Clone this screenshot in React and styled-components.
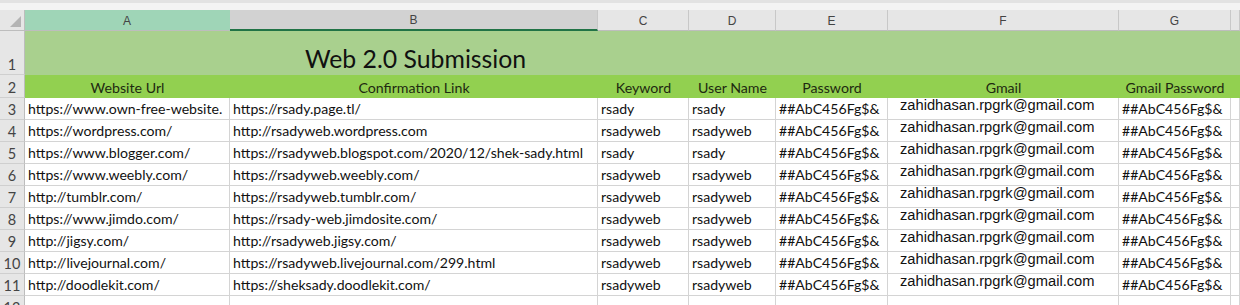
import React from "react";
import styled, { createGlobalStyle } from "styled-components";

const Global = createGlobalStyle`
  html, body { margin: 0; padding: 0; background: #ffffff; }
  body { font-family: "Lato", "Liberation Sans", sans-serif; overflow: hidden; }
`;

const COLS = [205, 368, 91, 87, 112, 231, 112];

const Page = styled.div`
  width: 1240px;
  height: 305px;
  overflow: hidden;
  background: #ffffff;
`;

const TopStrip = styled.div`
  height: 10px;
  background: #f3f3f3;
  border-top: 3px solid #e2e2e2;
  box-sizing: border-box;
`;

const Sheet = styled.div`
  display: grid;
  grid-template-columns: 25px ${COLS.map((c) => c + "px").join(" ")} 1fr;
  grid-template-rows: 21px 44px 23px repeat(10, 22px);
`;

const Corner = styled.div`
  position: relative;
  background: #e6e6e6;
  border-right: 1px solid #bdbdbd;
  border-bottom: 1px solid #bdbdbd;
  box-sizing: border-box;
  &::after {
    content: "";
    position: absolute;
    right: 3px;
    bottom: 3px;
    width: 0;
    height: 0;
    border-left: 11px solid transparent;
    border-bottom: 11px solid #b4b4b4;
  }
`;

const ColHead = styled.div`
  box-sizing: border-box;
  background: ${(p) => (p.$state === "full" ? "#9fd5b7" : p.$state === "part" ? "#d2d2d2" : "#e6e6e6")};
  border-right: 1px solid ${(p) => (p.$state === "full" ? "#9fd5b7" : "#c8c8c8")};
  border-bottom: ${(p) => (p.$state === "part" ? "2px solid #217346" : "1px solid #bdbdbd")};
  color: #444;
  font-family: "Liberation Sans", Arial, sans-serif;
  font-size: 12px;
  display: flex;
  align-items: center;
  justify-content: center;
  padding-top: 1px;
`;

const RowHead = styled.div`
  box-sizing: border-box;
  background: #e6e6e6;
  border-right: 1px solid #bdbdbd;
  border-bottom: 1px solid #cfcfcf;
  color: #444;
  font-family: "Lato", "Liberation Sans", sans-serif;
  font-size: 14.5px;
  display: flex;
  align-items: flex-end;
  justify-content: center;
  padding-bottom: 2px;
  line-height: 1;
`;

const TitleCell = styled.div`
  grid-column: 2 / span 8;
  background: #a9d08e;
  box-sizing: border-box;
  display: flex;
  align-items: flex-end;
  padding: 0 0 3px 280px;
  font-family: "Lato", "Liberation Sans", sans-serif;
  font-size: 24.8px;
  color: #111;
  line-height: 1;
`;

const HeaderCell = styled.div`
  background: #92d050;
  box-sizing: border-box;
  display: flex;
  align-items: flex-end;
  justify-content: center;
  padding-bottom: 3px;
  font-size: 14.2px;
  color: #1e2a10;
  white-space: nowrap;
  line-height: 1;
`;

const Cell = styled.div`
  box-sizing: border-box;
  border-right: 1px solid #d4d4d4;
  border-bottom: 1px solid #d4d4d4;
  overflow: hidden;
  white-space: nowrap;
  display: flex;
  align-items: flex-end;
  padding: 0 0 ${(p) => (p.$mail ? "6px" : "3px")} ${(p) => (p.$mail ? "12px" : "3px")};
  font-family: ${(p) => (p.$mail ? '"Liberation Sans", Arial, sans-serif' : '"Lato", "Liberation Sans", sans-serif')};
  font-size: ${(p) => (p.$mail ? "14.7px" : "14.1px")};
  color: #111;
  line-height: 1;
`;

const headers = ["Website Url", "Confirmation Link", "Keyword", "User Name", "Password", "Gmail", "Gmail Password"];
const letters = ["A", "B", "C", "D", "E", "F", "G", ""];

const MAIL = "zahidhasan.rpgrk@gmail.com";
const PW = "##AbC456Fg$&";

const rows = [
  ["https://www.own-free-website.", "https://rsady.page.tl/", "rsady", "rsady"],
  ["https://wordpress.com/", "http://rsadyweb.wordpress.com", "rsadyweb", "rsadyweb"],
  ["https://www.blogger.com/", "https://rsadyweb.blogspot.com/2020/12/shek-sady.html", "rsady", "rsady"],
  ["https://www.weebly.com/", "https://rsadyweb.weebly.com/", "rsadyweb", "rsadyweb"],
  ["http://tumblr.com/", "https://rsadyweb.tumblr.com/", "rsadyweb", "rsadyweb"],
  ["https://www.jimdo.com/", "https://rsady-web.jimdosite.com/", "rsadyweb", "rsadyweb"],
  ["http://jigsy.com/", "http://rsadyweb.jigsy.com/", "rsadyweb", "rsadyweb"],
  ["http://livejournal.com/", "https://rsadyweb.livejournal.com/299.html", "rsadyweb", "rsadyweb"],
  ["http://doodlekit.com/", "https://sheksady.doodlekit.com/", "rsadyweb", "rsadyweb"],
  ["", "", "", ""],
];

export default function App() {
  return (
    <Page>
      <Global />
      <TopStrip />
      <Sheet>
        <Corner />
        {letters.map((l, i) => (
          <ColHead key={i} $state={i === 0 ? "full" : i === 1 ? "part" : "none"}>
            {l}
          </ColHead>
        ))}

        <RowHead>1</RowHead>
        <TitleCell>Web 2.0 Submission</TitleCell>

        <RowHead>2</RowHead>
        {headers.map((h) => (
          <HeaderCell key={h}>{h}</HeaderCell>
        ))}
        <HeaderCell />

        {rows.map((r, i) => (
          <React.Fragment key={i}>
            <RowHead>{i + 3}</RowHead>
            <Cell>{r[0]}</Cell>
            <Cell>{r[1]}</Cell>
            <Cell>{r[2]}</Cell>
            <Cell>{r[3]}</Cell>
            <Cell>{r[0] ? PW : ""}</Cell>
            <Cell $mail>{r[0] ? MAIL : ""}</Cell>
            <Cell>{r[0] ? PW : ""}</Cell>
            <Cell />
          </React.Fragment>
        ))}
      </Sheet>
    </Page>
  );
}
